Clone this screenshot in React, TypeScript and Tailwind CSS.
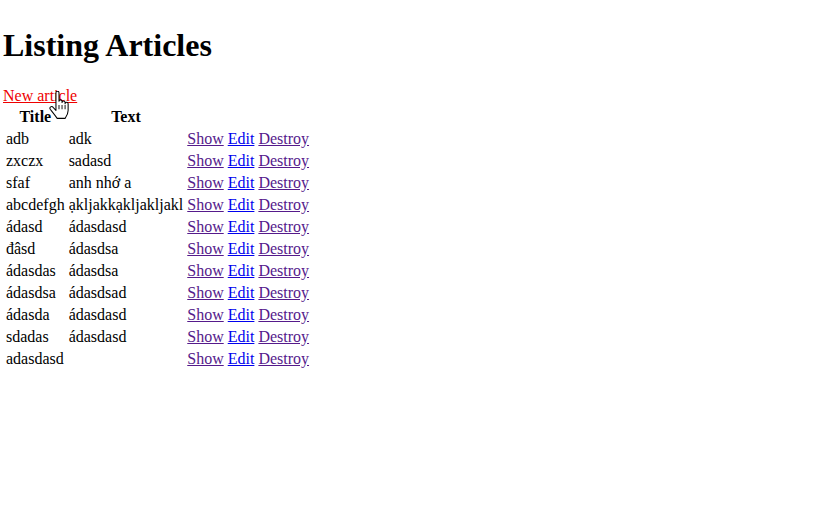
const articles: [string, string][] = [
  ['adb', 'adk'],
  ['zxczx', 'sadasd'],
  ['sfaf', 'anh nhớ a'],
  ['abcdefgh', 'ạkljakkạkljakljakl'],
  ['ádasd', 'ádasdasd'],
  ['đâsd', 'ádasdsa'],
  ['ádasdas', 'ádasdsa'],
  ['ádasdsa', 'ádasdsad'],
  ['ádasda', 'ádasdasd'],
  ['sdadas', 'ádasdasd'],
  ['adasdasd', ''],
];

function HandCursor() {
  return (
    <svg
      className="absolute left-[49px] top-[91px] pointer-events-none"
      width="20"
      height="28"
      viewBox="0 0 16 23"
    >
      <path
        d="M5.5 1.5 C5.5 0.7 6.1 0.2 6.8 0.2 C7.5 0.2 8 0.7 8 1.5 L8 8.5 C8 7.8 8.6 7.3 9.3 7.3 C10 7.3 10.5 7.8 10.5 8.5 L10.5 9.5 C10.5 8.8 11.1 8.3 11.8 8.3 C12.5 8.3 13 8.8 13 9.5 L13 10.5 C13 9.8 13.6 9.3 14.3 9.3 C15 9.3 15.5 9.8 15.5 10.5 L15.5 16 C15.5 19 14 21 13 22.5 L6.5 22.5 C5.5 21 4 19 2 16.5 L0.8 15 C0.3 14.3 0.5 13.4 1.2 13 C1.9 12.6 2.7 12.8 3.2 13.4 L5.5 16 Z"
        fill="#fff"
        stroke="#000"
        strokeWidth="0.85"
        strokeLinejoin="round"
      />
      <path d="M8 11.5 L8 15 M10.5 11.5 L10.5 15 M13 11.5 L13 15" stroke="#000" strokeWidth="0.75" />
    </svg>
  );
}

export default function App() {
  return (
    <div className="relative min-h-[508px] bg-white text-black pt-[6px] pl-[3px] text-[16px] leading-[normal] font-['Liberation_Serif','Times_New_Roman',serif]">
      <h1 className="text-[32px] font-bold leading-[normal] mt-[21.44px] mb-[22.44px]">Listing Articles</h1>

      <a href="#" className="text-[#ee0000] underline">New article</a>

      <table className="border-separate border-spacing-[2px]">
        <thead>
          <tr>
            <th className="p-px text-center font-bold">Title</th>
            <th className="p-px text-center font-bold">Text</th>
            <th className="p-px" colSpan={3}></th>
          </tr>
        </thead>
        <tbody>
          {articles.map(([title, text], i) => (
            <tr key={i}>
              <td className="p-px">{title}</td>
              <td className="p-px">{text}</td>
              <td className="p-px">
                <a href="#" className="text-[#551a8b] underline">Show</a>
              </td>
              <td className="p-px">
                <a href="#" className="text-[#0000ee] underline">Edit</a>
              </td>
              <td className="p-px">
                <a href="#" className="text-[#551a8b] underline">Destroy</a>
              </td>
            </tr>
          ))}
        </tbody>
      </table>

      <HandCursor />
    </div>
  );
}
